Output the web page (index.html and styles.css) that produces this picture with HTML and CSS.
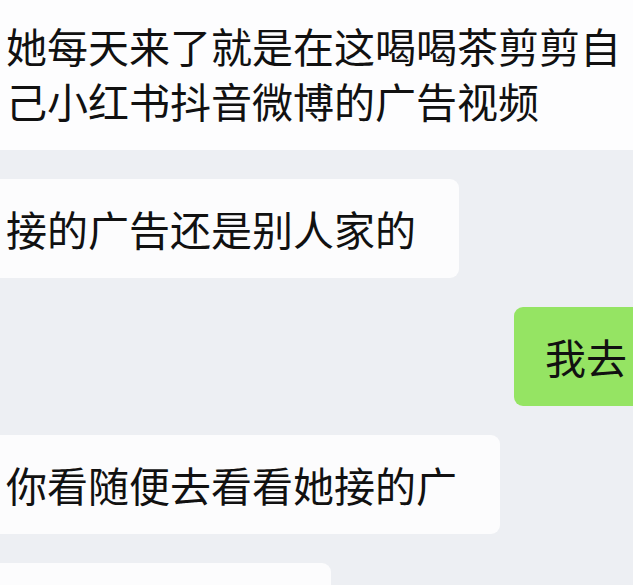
FILE: index.html
```html
<!DOCTYPE html>
<html lang="zh-CN">
  <head>
    <meta charset="UTF-8" />
    <meta name="viewport" content="width=device-width, initial-scale=1.0" />
    <link rel="stylesheet" href="styles.css">
    <title>聊天记录</title>
  </head>
  <body>
    <div class="chat">
      <div class="row first">
        <div class="bubble">她每天来了就是在这喝喝茶剪剪自己小红书抖音微博的广告视频</div>
      </div>
      <div class="row">
        <div class="bubble">接的广告还是别人家的</div>
      </div>
      <div class="row mine">
        <div class="bubble">我去</div>
      </div>
      <div class="row">
        <div class="bubble">你看随便去看看她接的广</div>
      </div>
      <!-- next message starts below the fold -->
      <div class="row">
        <div class="bubble tail"></div>
      </div>
    </div>
  </body>
</html>
```

FILE: styles.css
```css
* {
  box-sizing: border-box;
}
body {
  margin: 0;
  background: #edeff3;
  font-family: "Noto Sans CJK SC", "Noto Sans", sans-serif;
}

.chat {
  width: 633px;
  height: 585px;
  overflow: hidden;
  display: flex;
  flex-direction: column;
  gap: 29px;
}

.row {
  display: flex;
  justify-content: flex-start;
}
.row.first {
  margin-top: -4px;
}
.row.mine {
  justify-content: flex-end;
}

.bubble {
  flex-shrink: 0;
  max-width: 700px;
  margin-left: -30px;
  padding: 22px 43px 22px 36px;
  background: #fcfcfd;
  border-radius: 9px;
  color: #111;
  font-size: 41px;
  line-height: 55px;
}
.first .bubble {
  width: 700px;
  background: #fdfdfe;
}
.mine .bubble {
  margin-left: 0;
  margin-right: -24px;
  padding: 22px 30px 22px 31px;
  background: #95e463;
}
.tail {
  width: 361px;
  height: 110px;
}
```
